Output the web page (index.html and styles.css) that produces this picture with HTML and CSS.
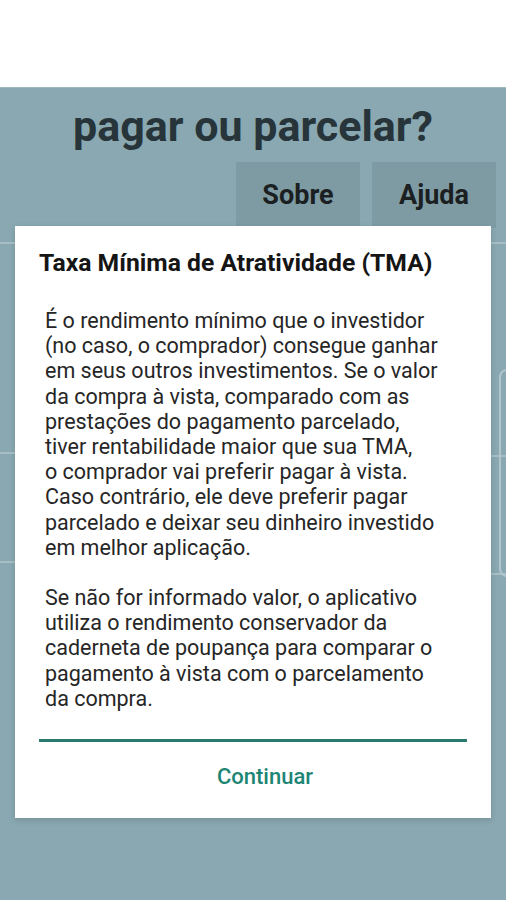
FILE: index.html
```html
<!DOCTYPE html>
<html lang="pt-BR">
<head>
  <meta charset="UTF-8">
  <meta name="viewport" content="width=device-width, initial-scale=1.0">
  <title>Pagar ou parcelar?</title>
  <link rel="stylesheet" href="styles.css">
</head>
<body>

<div class="statusbar"></div>

<div class="screen">
  <h1 class="app-title">pagar ou parcelar?</h1>

  <div class="tabs">
    <button class="tab">Sobre</button>
    <button class="tab">Ajuda</button>
  </div>

  <!-- rows of the form behind the dialog -->
  <div class="rows">
    <div class="col col-left">
      <div class="row" style="height: 208px"></div>
      <div class="row" style="height: 107px"></div>
      <div class="row" style="height: 105px"></div>
    </div>
    <div class="col col-right">
      <div class="row" style="height: 211px"></div>
      <div class="row" style="height: 116px"></div>
      <div class="row" style="height: 174px"></div>
    </div>
  </div>
  <div class="card-edge"></div>

  <div class="dialog">
    <h2 class="dialog-title">Taxa Mínima de Atratividade (TMA)</h2>
    <p class="dialog-text">É o rendimento mínimo que o investidor<br>
(no caso, o comprador) consegue ganhar<br>
em seus outros investimentos. Se o valor<br>
da compra à vista, comparado com as<br>
prestações do pagamento parcelado,<br>
tiver rentabilidade maior que sua TMA,<br>
o comprador vai preferir pagar à vista.<br>
Caso contrário, ele deve preferir pagar<br>
parcelado e deixar seu dinheiro investido<br>
em melhor aplicação.</p>
    <p class="dialog-text">Se não for informado valor, o aplicativo<br>
utiliza o rendimento conservador da<br>
caderneta de poupança para comparar o<br>
pagamento à vista com o parcelamento<br>
da compra.</p>
    <div class="dialog-divider"></div>
    <button class="dialog-button">Continuar</button>
  </div>
</div>

</body>
</html>
```

FILE: styles.css
```css
body {
  font-family: Roboto, 'Noto Sans', sans-serif;
  margin: 0;
  padding: 0;
  width: 506px;
  height: 900px;
  overflow: hidden;
  background-color: #fff;
}

.statusbar {
  height: 87px;
  background-color: #fff;
}

.screen {
  position: relative;
  height: 813px;
  background-color: #89a8b1;
  border-top: 1px solid #9fb8bf;
  box-sizing: border-box;
}

.app-title {
  margin: 0;
  padding-top: 14px;
  text-align: center;
  font-size: 43px;
  font-weight: bold;
  color: #27343a;
  line-height: 48px;
}

.tabs {
  display: flex;
  justify-content: flex-end;
  gap: 12px;
  padding-right: 10px;
  margin-top: 12px;
}

.tab {
  width: 124px;
  height: 66px;
  padding: 0;
  border: none;
  background-color: #7e9ba4;
  font-family: inherit;
  font-size: 27px;
  font-weight: bold;
  color: #1b1f21;
}

.rows {
  display: flex;
  justify-content: space-between;
  margin-top: 14px;
}

.col {
  width: 15px;
}

.row {
  border-top: 2px solid #a7bec4;
}

.card-edge {
  position: absolute;
  top: 281px;
  left: 499px;
  width: 20px;
  height: 204px;
  border: 2px solid #b1c6cc;
  border-radius: 8px;
}

.dialog {
  position: absolute;
  top: 138px;
  left: 15px;
  width: 476px;
  height: 592px;
  background-color: #fff;
  box-shadow: 0 2px 6px rgba(0, 0, 0, 0.15);
  padding: 22px 24px 0;
  box-sizing: border-box;
}

.dialog-title {
  margin: 0 0 30px;
  font-size: 24.7px;
  font-weight: bold;
  color: #151515;
  line-height: 30px;
}

.dialog-text {
  margin: 0 0 25px 6px;
  font-size: 21.5px;
  line-height: 25.2px;
  color: #262626;
  white-space: nowrap;
}

.dialog-divider {
  height: 3px;
  margin-top: 28px;
  background-color: #2b7a6f;
}

.dialog-button {
  display: block;
  margin: 16px auto 0;
  padding: 6px 12px 6px 36px;
  border: none;
  background: none;
  font-family: inherit;
  font-size: 22px;
  font-weight: 500;
  color: #1d8574;
}
```
